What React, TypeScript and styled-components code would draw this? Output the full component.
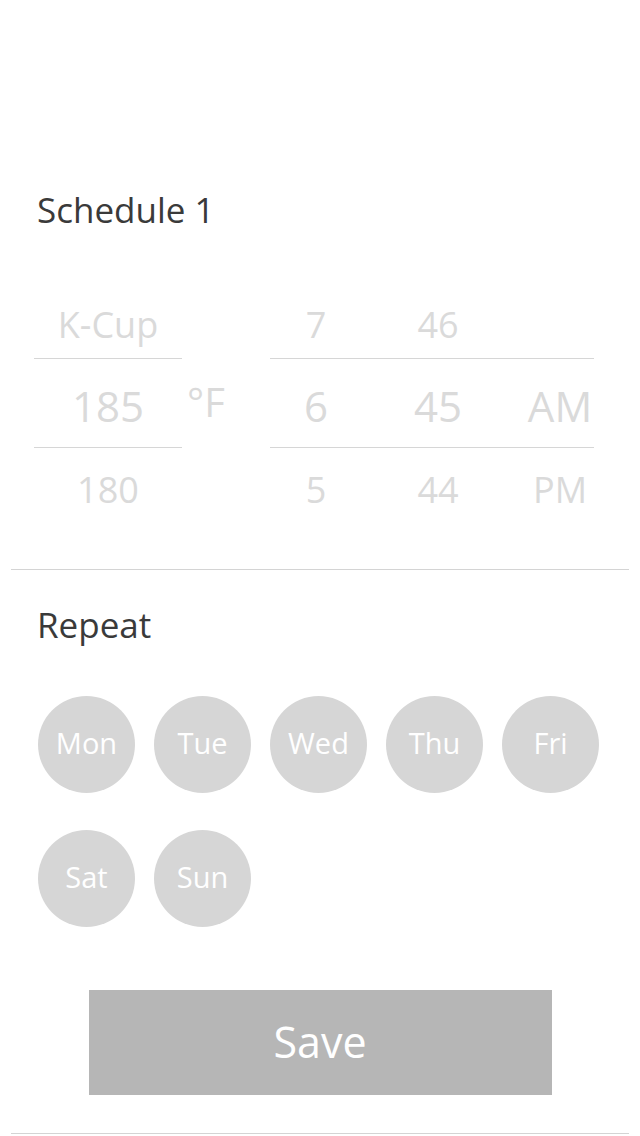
import React from "react";
import styled, { createGlobalStyle } from "styled-components";

const Global = createGlobalStyle`
  html, body { margin: 0; padding: 0; background: #ffffff; }
  body { font-family: "Open Sans", "Noto Sans", sans-serif; -webkit-font-smoothing: antialiased; }
  * { box-sizing: border-box; }
`;

const Page = styled.div`
  width: 640px;
  min-height: 1136px;
  display: flex;
  flex-direction: column;
  background: #fff;
`;

const SectionTitle = styled.h2<{ $top: number }>`
  margin: ${(p) => p.$top}px 0 0;
  padding: 0 37px;
  font-size: 35px;
  line-height: 44px;
  font-weight: 400;
  color: #3a3a3a;
`;

const Picker = styled.div`
  margin-top: 38px;
  padding-left: 34px;
  display: flex;
  align-items: flex-start;
`;

const Wheel = styled.div<{ $width: number }>`
  width: ${(p) => p.$width}px;
  display: flex;
  flex-direction: column;
`;

type RowKind = "top" | "mid" | "bot";

const Row = styled.div<{ $kind: RowKind; $cols: string }>`
  display: grid;
  grid-template-columns: ${(p) => p.$cols};
  align-items: center;
  height: ${(p) => (p.$kind === "top" ? 88 : p.$kind === "mid" ? 90 : 84)}px;
  padding-top: ${(p) => (p.$kind === "top" ? 22 : p.$kind === "mid" ? 6 : 0)}px;
  border-top: ${(p) => (p.$kind === "mid" ? "1px solid #d6d6d6" : "none")};
  border-bottom: ${(p) => (p.$kind === "mid" ? "1px solid #d6d6d6" : "none")};
`;

const Cell = styled.div<{ $big?: boolean; $shift?: number }>`
  text-align: center;
  padding-left: ${(p) => p.$shift || 0}px;
  font-size: ${(p) => (p.$big ? 42 : 36)}px;
  line-height: ${(p) => (p.$big ? 42 : 36)}px;
  color: #dadada;
  white-space: nowrap;
`;

const UnitCol = styled.div`
  width: 88px;
  padding-left: 5px;
  padding-top: 112px;
  font-size: 40px;
  line-height: 40px;
  color: #dadada;
`;

const Divider = styled.div<{ $top: number }>`
  margin: ${(p) => p.$top}px 11px 0;
  height: 1px;
  background: #d4d4d4;
`;

const Days = styled.div`
  margin-top: 49px;
  padding-left: 38px;
  display: flex;
  flex-wrap: wrap;
  column-gap: 19px;
  row-gap: 37px;
  width: 620px;
`;

const Day = styled.div`
  width: 97px;
  height: 97px;
  border-radius: 50%;
  background: #d6d6d6;
  color: #ffffff;
  display: flex;
  align-items: center;
  justify-content: center;
  padding-bottom: 5px;
  font-size: 29px;
  line-height: 1;
`;

const SaveButton = styled.button`
  margin: 63px auto 0;
  width: 463px;
  height: 105px;
  border: none;
  background: #b6b6b6;
  color: #ffffff;
  font-family: "Open Sans", "Noto Sans", sans-serif;
  font-size: 43px;
  line-height: 1;
  display: flex;
  align-items: center;
  justify-content: center;
  padding: 0 0 2px;
`;

const timeCols = "92px 152px 80px";

export default function App() {
  const days = ["Mon", "Tue", "Wed", "Thu", "Fri", "Sat", "Sun"];
  return (
    <Page>
      <Global />
      <SectionTitle $top={188}>Schedule 1</SectionTitle>
      <Picker>
        <Wheel $width={148}>
          <Row $kind="top" $cols="1fr">
            <Cell>K-Cup</Cell>
          </Row>
          <Row $kind="mid" $cols="1fr">
            <Cell $big>185</Cell>
          </Row>
          <Row $kind="bot" $cols="1fr">
            <Cell>180</Cell>
          </Row>
        </Wheel>
        <UnitCol>°F</UnitCol>
        <Wheel $width={324}>
          <Row $kind="top" $cols={timeCols}>
            <Cell>7</Cell>
            <Cell>46</Cell>
            <Cell $shift={12}></Cell>
          </Row>
          <Row $kind="mid" $cols={timeCols}>
            <Cell $big>6</Cell>
            <Cell $big>45</Cell>
            <Cell $big $shift={12}>AM</Cell>
          </Row>
          <Row $kind="bot" $cols={timeCols}>
            <Cell>5</Cell>
            <Cell>44</Cell>
            <Cell $shift={12}>PM</Cell>
          </Row>
        </Wheel>
      </Picker>
      <Divider $top={37} />
      <SectionTitle $top={33}>Repeat</SectionTitle>
      <Days>
        {days.map((d) => (
          <Day key={d}>{d}</Day>
        ))}
      </Days>
      <SaveButton>Save</SaveButton>
      <Divider $top={38} />
    </Page>
  );
}
